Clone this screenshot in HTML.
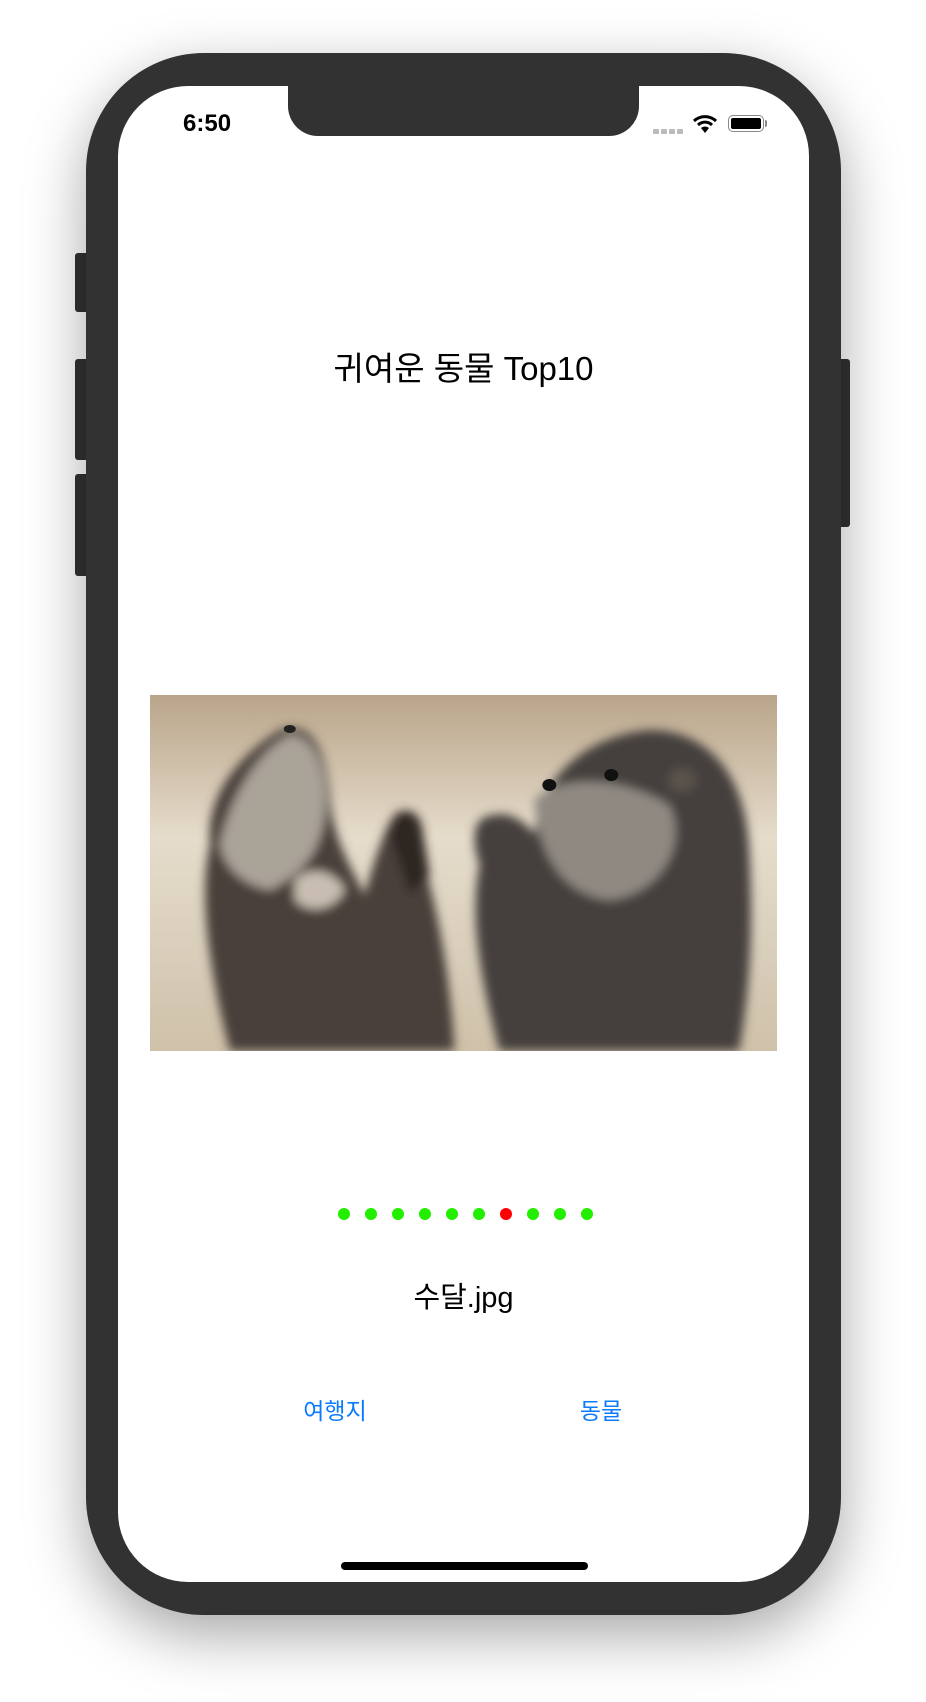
<!DOCTYPE html>
<html><head><meta charset="utf-8"><style>
html,body{margin:0;padding:0;background:#fff;width:926px;height:1702px;overflow:hidden;position:relative;font-family:"Liberation Sans","Noto Sans CJK KR",sans-serif}
.abs{position:absolute}
.phone{left:86px;top:53px;width:755px;height:1562px;background:#323232;border-radius:118px;box-shadow:0 20px 60px rgba(0,0,0,.35)}
.screen{left:118px;top:86px;width:691px;height:1496px;background:#fff;border-radius:70px;overflow:hidden}
.notch{left:170px;top:-2px;width:351px;height:52px;background:#323232;border-radius:0 0 30px 30px}
.btn{background:#323232;border-radius:3px}
.c{text-align:center;width:691px;left:0}
.dot{width:12px;height:12px;border-radius:50%;background:#22ee00}
</style></head><body>
<div class="abs btn" style="left:75px;top:253px;width:14px;height:59px"></div>
<div class="abs btn" style="left:75px;top:359px;width:14px;height:101px"></div>
<div class="abs btn" style="left:75px;top:474px;width:14px;height:102px"></div>
<div class="abs btn" style="left:837px;top:359px;width:13px;height:168px"></div>
<div class="abs phone"></div>
<div class="abs screen">
  <div class="abs notch"></div>
  <div class="abs" style="left:65px;top:24px;font-size:24px;font-weight:bold;color:#000">6:50</div>
  <div class="abs" style="left:535px;top:43px;width:32px;height:5px;display:flex;gap:2px">
    <span style="width:6px;height:5px;background:#bbb;border-radius:1px"></span><span style="width:6px;height:5px;background:#bbb;border-radius:1px"></span><span style="width:6px;height:5px;background:#bbb;border-radius:1px"></span><span style="width:6px;height:5px;background:#bbb;border-radius:1px"></span>
  </div>
  <svg class="abs" style="left:574px;top:28px" width="26" height="20" viewBox="0 0 26 20">
    <path d="M2 7 A16 16 0 0 1 24 7" stroke="#000" stroke-width="3" fill="none"/>
    <path d="M6 11 A10 10 0 0 1 20 11" stroke="#000" stroke-width="3" fill="none"/>
    <path d="M9 14 L13 19 L17 14 A6 6 0 0 0 9 14Z" fill="#000"/>
  </svg>
  <div class="abs" style="left:610px;top:29px;width:36px;height:17px;border:1.5px solid #888;border-radius:5px;box-sizing:border-box;padding:2px"><div style="width:100%;height:100%;background:#000;border-radius:2px"></div></div>
  <div class="abs" style="left:647px;top:34px;width:2px;height:7px;background:#888;border-radius:0 2px 2px 0"></div>

  <div class="abs c" style="top:256px;font-size:33px;color:#000">귀여운 동물 Top10</div>

  <svg class="abs" style="left:32px;top:609px" width="627" height="356" viewBox="0 0 628 356" preserveAspectRatio="none">
    <defs>
      <linearGradient id="bg" x1="0" y1="0" x2="0" y2="1"><stop offset="0" stop-color="#b9a58a"/><stop offset=".4" stop-color="#e6dccb"/><stop offset=".75" stop-color="#d8cdb9"/><stop offset="1" stop-color="#cfc1a9"/></linearGradient>
      <filter id="bl"><feGaussianBlur stdDeviation="5"/></filter>
    </defs>
    <rect width="628" height="356" fill="url(#bg)"/>
    <g filter="url(#bl)">
      <path d="M80 356 C55 260 50 190 60 150 C55 100 90 60 130 35 C160 25 175 50 180 100 C182 140 200 170 215 200 C240 110 250 110 260 120 C280 180 300 260 305 356Z" fill="#4a403b"/>
      <path d="M70 150 C80 100 110 55 140 40 C165 40 180 80 175 120 C170 160 150 180 120 195 C95 190 75 175 70 150Z" fill="#aaa398"/>
      <path d="M145 185 C160 170 185 175 195 195 C185 215 160 220 145 205Z" fill="#c8bdb0"/>
      <path d="M240 140 C248 110 265 110 272 130 L280 180 L260 200Z" fill="#2e2724"/>
      <path d="M350 356 C330 280 320 220 330 170 C320 140 325 120 345 120 C360 115 380 130 385 140 C390 80 440 40 500 35 C560 35 595 80 600 150 C605 240 600 300 590 356Z" fill="#45403c"/>
      <path d="M385 105 C410 80 470 80 520 110 C540 150 510 200 460 205 C420 200 390 170 385 105Z" fill="#8f8982"/>
      <ellipse cx="533" cy="85" rx="14" ry="12" fill="#5a524c"/>
    </g>
    <ellipse cx="462" cy="80" rx="7" ry="6" fill="#111"/>
    <ellipse cx="400" cy="90" rx="7" ry="6" fill="#111"/>
    <ellipse cx="140" cy="34" rx="6" ry="4" fill="#222"/>
  </svg>

  <div class="abs dot" style="left:220px;top:1122px"></div>
  <div class="abs dot" style="left:247px;top:1122px"></div>
  <div class="abs dot" style="left:274px;top:1122px"></div>
  <div class="abs dot" style="left:301px;top:1122px"></div>
  <div class="abs dot" style="left:328px;top:1122px"></div>
  <div class="abs dot" style="left:355px;top:1122px"></div>
  <div class="abs dot" style="left:382px;top:1122px;background:#ff0000"></div>
  <div class="abs dot" style="left:409px;top:1122px"></div>
  <div class="abs dot" style="left:436px;top:1122px"></div>
  <div class="abs dot" style="left:463px;top:1122px"></div>

  <div class="abs c" style="top:1188px;font-size:29px;color:#000">수달.jpg</div>
  <div class="abs" style="left:137px;width:160px;text-align:center;top:1306px;font-size:23px;color:#0a7aff">여행지</div>
  <div class="abs" style="left:403px;width:160px;text-align:center;top:1306px;font-size:23px;color:#0a7aff">동물</div>

  <div class="abs" style="left:223px;top:1476px;width:247px;height:8px;background:#000;border-radius:4px"></div>
</div>
</body></html>
